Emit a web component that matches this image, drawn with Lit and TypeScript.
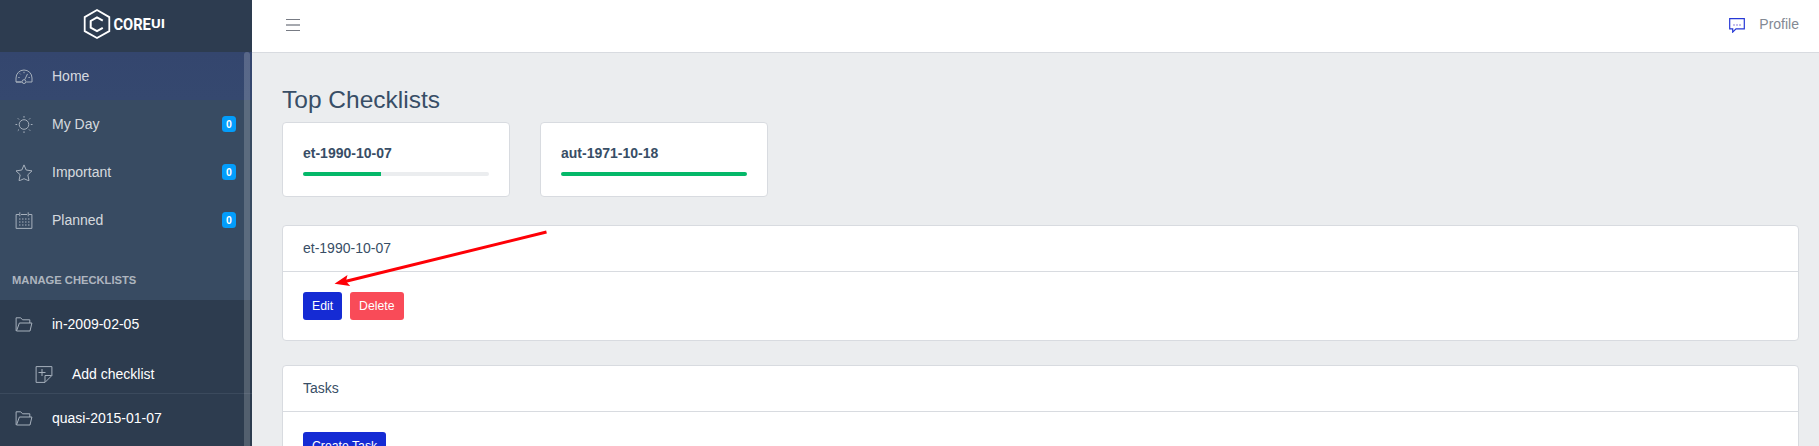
import { LitElement, html, css, svg } from 'lit';
import { customElement, property } from 'lit/decorators.js';

const icons: Record<string, unknown> = {
  speed: svg`<path d="M.5 14V10A8 8 0 0 1 16.500 10v4h-5.700M6.200 14H.5z"/><circle cx="8.500" cy="13.600" r="1.900"/><path d="M9.200 11.700l2.800-5.800"/><path d="M8.500 3.800v1.400M4.300 5.500l.8.800M2.800 9.500h1.300M13 9.500h1.300"/>`,
  sun: svg`<circle cx="8.500" cy="8.500" r="4.800"/><path d="M8.500 0v1.700M8.500 15.300V17M0 8.500h1.700M15.300 8.500H17M2.300 2.300l1.200 1.200M13.500 13.500l1.200 1.200M14.700 2.300l-1.200 1.200M3.500 13.500l-1.200 1.200"/>`,
  star: svg`<path stroke-linejoin="round" d="M8.500.9l2.200 5.100 5.800.9-4.200 3.900 1.200 5.700-1.200-.1-3.800-1.700-3.800 1.700-1.200.1 1.200-5.700L.5 6.900 6.300 6z"/>`,
  calendar: svg`<path d="M3.500 2.500H.6v13.900h15.800V2.500H13.500M5.500 2.500h6M4.300.3v4M12.700.3v4"/><path stroke-dasharray="1.500 1.500" d="M3.500 7h10.500M3.500 10h10.500M3.500 13h10.500"/>`,
  folder: svg`<path d="M1 15L.6 14.500V1.800h4.600l1.800 2h7.300v3.200M1 15l2.900-8h12.500l-1.900 8z"/>`,
  note: svg`<path d="M.6.6h15.800v8.900l-6.900 6.900H.6zM9.500 16.200V9.500h6.700M3 6.500h7M6.500 3v7"/>`,
};

@customElement('nav-entry')
class NavEntry extends LitElement {
  @property() icon = '';
  @property() label = '';
  @property() badge = '';
  static styles = css`
    :host { display: flex; align-items: center; height: 48px; padding: 0 16px 0 15px; color: rgba(255,255,255,.8); box-sizing: border-box; }
    :host(.active) { background: linear-gradient(#34466e, #35486f); }
    :host(.bright) { color: #fff; }
    :host(.sub) { height: 45px; padding: 7px 16px 0 35px; }
    svg { width: 18px; height: 17px; margin-right: 19px; fill: none; stroke: #a6b0bc; stroke-width: 1; flex: none; overflow: visible; }
    .badge { margin-left: auto; width: 14px; height: 16px; line-height: 16px; text-align: center; border-radius: 3.500px; background: #039dfb; color: #fff; font-weight: 700; font-size: 10.500px; }
  `;
  render() {
    return html`<svg viewBox="0 0 17 17">${icons[this.icon]}</svg><span>${this.label}</span>
      ${this.badge ? html`<span class="badge">${this.badge}</span>` : ''}`;
  }
}

@customElement('app-root')
class AppRoot extends LitElement {
  static styles = css`
    :host { display: flex; position: relative; height: 446px; overflow: hidden; font: 14px/21px "Liberation Sans", Arial, sans-serif; color: #384e66; background: #ebedef; }
    * { box-sizing: border-box; }
    .side { width: 252px; flex: none; background: #384b62; display: flex; flex-direction: column; position: relative; }
    .brand { height: 52px; flex: none; background: #2d3c50; display: flex; justify-content: center; padding: 8px 3px 0 0; }
    .thumb { position: absolute; right: 2px; top: 52px; width: 6px; height: 400px; background: #ffffff2e; border-radius: 3px; }
    .heading { height: 56px; flex: none; padding: 26px 12px 0; font-size: 11.2px; font-weight: 700; color: rgba(255,255,255,.6); text-transform: uppercase; }
    nav-entry { flex: none; }
    .group { background: #2d3c4f; height: 94px; flex: none; border-bottom: 1px solid #3b4a5d; }
    .group.last { border: 0; }
    .page { flex: 1; min-width: 0; }
    header { height: 53px; background: #fff; border-bottom: 1px solid #d8dbe0; display: flex; align-items: center; padding: 0 20px 4px 34px; color: #838994; }
    .menu { width: 14px; height: 14px; margin-top: 2px; }
    .chat { width: 16px; height: 15px; margin: 2px 14px 0 auto; }
    main { padding: 32px 20px 0 30px; }
    h1 { font-size: 24.5px; line-height: 29px; font-weight: 400; margin: 0 0 8px; }
    .tiles { display: flex; gap: 30px; margin-bottom: 28px; }
    .card { background: #fff; border: 1px solid #d8dbe0; border-radius: 4px; }
    .tile { width: 228px; height: 75px; padding: 20px; font-weight: 700; }
    .bar { height: 4px; border-radius: 4px; background: #ebedef; overflow: hidden; margin-top: 8px; }
    .fill { height: 4px; background: #04b869; }
    .panel { height: 116px; margin-bottom: 24px; }
    .title { height: 46px; border-bottom: 1px solid #d8dbe0; padding: 12px 20px; }
    .actions { display: flex; gap: 8px; padding: 20px; }
    button { height: 28px; padding: 0 9px; border: 0; border-radius: 3px; background: #152bd4; color: #fff; font: 12.25px/28px "Liberation Sans", Arial, sans-serif; }
    button.danger { background: #f94b58; }
    .arrow { position: absolute; left: 330px; top: 224px; width: 224px; height: 68px; }
  `;
  tile(name: string, pct: number) {
    return html`<div class="card tile">${name}<div class="bar"><div class="fill" style="width:${pct}%"></div></div></div>`;
  }
  render() {
    return html`
      <aside class="side">
        <div class="brand">
          <svg width="84" height="32" viewBox="0 0 84 32" fill="none" stroke="#fff">
            <path stroke-width="1.8" d="M14 2l12.300 7.100v14L14 30 1.700 23.100v-14z"/>
            <path stroke-width="2" d="M19.800 12.700L14 9.400l-6.300 3.600v6.700L14 23.200l5.800-3.300"/>
            <g fill="#fff" stroke="none" font-family="Roboto" font-weight="700">
              <text x="36.300" y="22" transform="scale(.84 1)" font-size="16.800" textLength="44.500" lengthAdjust="spacingAndGlyphs">CORE</text>
              <text x="68" y="19.500" font-size="13" textLength="14" lengthAdjust="spacingAndGlyphs">UI</text>
            </g>
          </svg>
        </div>
        <nav-entry class="active" icon="speed" label="Home"></nav-entry>
        <nav-entry icon="sun" label="My Day" badge="0"></nav-entry>
        <nav-entry icon="star" label="Important" badge="0"></nav-entry>
        <nav-entry icon="calendar" label="Planned" badge="0"></nav-entry>
        <div class="heading">Manage Checklists</div>
        <div class="group">
          <nav-entry class="bright" icon="folder" label="in-2009-02-05"></nav-entry>
          <nav-entry class="bright sub" icon="note" label="Add checklist"></nav-entry>
        </div>
        <div class="group last"><nav-entry class="bright" icon="folder" label="quasi-2015-01-07"></nav-entry></div>
        <div class="thumb"></div>
      </aside>
      <div class="page">
        <header>
          <svg class="menu" viewBox="0 0 14 14" fill="#777b84"><path d="M0 1h14v1H0zM0 12h14v1H0z"/><path opacity=".65" d="M0 6h14v2H0z"/></svg>
          <svg class="chat" viewBox="0 0 16 15" fill="none" stroke="#2638d6"><path stroke-width="1.200" d="M.7.7h14.600v10.100H7l-3.300 3.300v-3.300h-3z"/><path stroke="#b3a9ea" stroke-width="1.500" stroke-dasharray="2 1" d="M4 7h8"/></svg>
          <span>Profile</span>
        </header>
        <main>
          <h1>Top Checklists</h1>
          <div class="tiles">${this.tile('et-1990-10-07', 42)}${this.tile('aut-1971-10-18', 100)}</div>
          <section class="card panel">
            <div class="title">et-1990-10-07</div>
            <div class="actions"><button>Edit</button><button class="danger">Delete</button></div>
          </section>
          <section class="card panel">
            <div class="title">Tasks</div>
            <div class="actions"><button>Create Task</button></div>
          </section>
        </main>
      </div>
      <svg class="arrow" viewBox="330 224 224 68"><path d="M345 281.500L546.500 232" stroke="#fe0006" stroke-width="3" fill="none"/><path fill="#fe0006" d="M334.500 283.700l13-8.700-1.600 6.200 4.300 4.800z"/></svg>
    `;
  }
}
